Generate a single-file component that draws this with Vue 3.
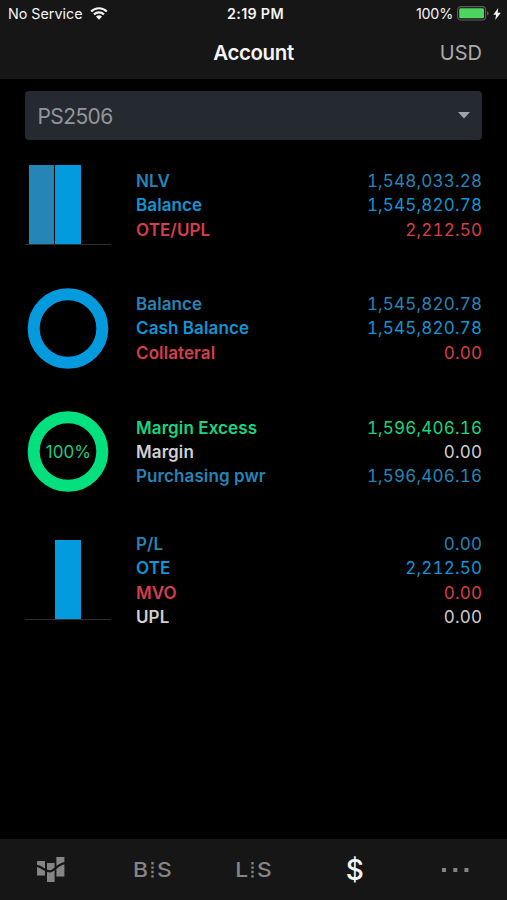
<script setup>
import { ref, computed } from 'vue';

const account = ref('PS2506');
const currency = ref('USD');

const sections = [
  {
    id: 'nlv',
    chart: 'bars',
    bars: [
      { color: '#2585b7', height: 79 },
      { color: '#049ade', height: 79 },
      { color: '#2b0a0c', height: 0 }
    ],
    rows: [
      { label: 'NLV', value: 1548033.28, tone: 'steel' },
      { label: 'Balance', value: 1545820.78, tone: 'blue' },
      { label: 'OTE/UPL', value: 2212.5, tone: 'red' }
    ]
  },
  {
    id: 'balance',
    chart: 'ring',
    ringColor: '#049ade',
    rows: [
      { label: 'Balance', value: 1545820.78, tone: 'steel' },
      { label: 'Cash Balance', value: 1545820.78, tone: 'blue' },
      { label: 'Collateral', value: 0, tone: 'red' }
    ]
  },
  {
    id: 'margin',
    chart: 'ring',
    ringColor: '#03e17f',
    ringLabel: '100%',
    rows: [
      { label: 'Margin Excess', value: 1596406.16, tone: 'green' },
      { label: 'Margin', value: 0, tone: 'white' },
      { label: 'Purchasing pwr', value: 1596406.16, tone: 'steel' }
    ]
  },
  {
    id: 'pl',
    chart: 'bars',
    bars: [
      { color: '#2585b7', height: 0 },
      { color: '#049ade', height: 79 },
      { color: '#d93a4a', height: 0 }
    ],
    rows: [
      { label: 'P/L', value: 0, tone: 'steel' },
      { label: 'OTE', value: 2212.5, tone: 'blue' },
      { label: 'MVO', value: 0, tone: 'red' },
      { label: 'UPL', value: 0, tone: 'white' }
    ]
  }
];

const format = (value) => value.toLocaleString('en-US', {
  minimumFractionDigits: 2,
  maximumFractionDigits: 2
});

const formattedSections = computed(() => sections.map((section) => ({
  ...section,
  rows: section.rows.map((row) => ({ ...row, text: format(row.value) }))
})));
</script>

<template>
  <div class="screen">
    <header class="header">
      <div class="status">
        <div class="status-left">
          <span class="carrier">No Service</span>
          <svg class="wifi" width="18" height="13" viewBox="0 0 18 13">
            <path d="M1.2 4.5a11 11 0 0 1 15.6 0M4 7.5a7.1 7.1 0 0 1 10 0" fill="none" stroke="#f4f4f4" stroke-width="2.2" />
            <path d="M6 9.6a4.3 4.3 0 0 1 6 0L9 12.7z" fill="#f4f4f4" />
          </svg>
        </div>
        <span class="time">2:19 PM</span>
        <div class="status-right">
          <span class="percent">100%</span>
          <svg class="battery" width="32" height="15" viewBox="0 0 32 15">
            <rect x=".6" y=".6" width="28" height="13.4" rx="3.2" fill="none" stroke="#5c5c5c" stroke-width="1.1" />
            <rect x="2.2" y="2.3" width="24.8" height="10" rx="1.4" fill="#4cd55f" />
            <path d="M30 5q1.6.6 1.6 2.3T30 9.6z" fill="#5c5c5c" />
          </svg>
          <svg class="bolt" width="8" height="12" viewBox="0 0 8 12">
            <path d="M5.2 0 .3 6.8h2.8L2.2 12 7.8 4.8H4.7z" fill="#f4f4f4" />
          </svg>
        </div>
      </div>
      <div class="nav">
        <span></span>
        <h1 class="title">Account</h1>
        <button class="currency">{{ currency }}</button>
      </div>
    </header>

    <main class="content">
      <button class="account-select">
        <span class="account">{{ account }}</span>
        <svg width="12" height="7" viewBox="0 0 12 7"><path d="M0 0h12L6 6.6z" fill="#a2a5a8" /></svg>
      </button>

      <section v-for="section in formattedSections" :key="section.id" class="section">
        <div v-if="section.chart === 'bars'" class="bars">
          <div
            v-for="(bar, i) in section.bars"
            :key="i"
            class="bar"
            :style="{ height: bar.height + 'px', backgroundColor: bar.color }"
          ></div>
        </div>
        <svg v-else class="ring" width="86" height="82" viewBox="0 0 86 82">
          <circle cx="43" cy="41.5" r="34.3" fill="none" :stroke="section.ringColor" stroke-width="12" />
          <text v-if="section.ringLabel" x="43.3" y="47.8" text-anchor="middle" class="ring-label">{{ section.ringLabel }}</text>
        </svg>

        <div class="rows">
          <div v-for="row in section.rows" :key="row.label" class="row" :class="row.tone">
            <span class="label">{{ row.label }}</span>
            <span class="value">{{ row.text }}</span>
          </div>
        </div>
      </section>
    </main>

    <nav class="tabs">
      <button class="tab">
        <svg width="28" height="26" viewBox="0 0 28 26">
          <path d="M0 4h8v14.6H0zM10 6h7.6v19H10zM19.4 0h8v19.6h-8z" fill="#858585" />
          <path d="M-1 8.8C5 9.6 8.5 14.4 13 14.4S20 6.6 28.4 6" fill="none" stroke="#161616" stroke-width="2.2" />
        </svg>
      </button>
      <button class="tab pair">
        <span class="glyph">B</span>
        <svg width="3" height="16" viewBox="0 0 3 16"><path d="M.3 0h2.4v2.4H.3zM.3 4.4h2.4v2.4H.3zM.3 8.8h2.4v2.4H.3zM.3 13.2h2.4v2.4H.3z" fill="#858585" /></svg>
        <span class="glyph">S</span>
      </button>
      <button class="tab pair">
        <span class="glyph">L</span>
        <svg width="3" height="16" viewBox="0 0 3 16"><path d="M.3 0h2.4v2.4H.3zM.3 4.4h2.4v2.4H.3zM.3 8.8h2.4v2.4H.3zM.3 13.2h2.4v2.4H.3z" fill="#858585" /></svg>
        <span class="glyph">S</span>
      </button>
      <button class="tab active"><span>$</span></button>
      <button class="tab">
        <svg width="28" height="4" viewBox="0 0 28 4"><path d="M0 0h4v4H0zM11.3 0h4v4h-4zM22.4 0h4v4h-4z" fill="#858585" /></svg>
      </button>
    </nav>
  </div>
</template>

<style>
body {
  margin: 0;
  background: #000;
}
</style>

<style scoped>
.screen {
  display: flex;
  flex-direction: column;
  height: 900px;
  background: #000;
  color: #f4f4f4;
  font-family: Inter, "Liberation Sans", sans-serif;
  overflow: hidden;
}

button {
  border: 0;
  padding: 0;
  background: none;
  color: inherit;
  font: inherit;
}

.header {
  height: 79px;
  flex: none;
  background: #161616;
}

.status {
  display: grid;
  grid-template-columns: 1fr auto 1fr;
  align-items: center;
  height: 27px;
  padding: 0 6px 0 8px;
  font-size: 14.3px;
}

.status-left,
.status-right {
  display: flex;
  align-items: center;
}

.status-right {
  justify-content: flex-end;
}

.wifi {
  margin-left: 8px;
}

.time {
  padding-left: 2px;
  font-weight: 600;
  letter-spacing: 0.3px;
}

.percent {
  letter-spacing: -0.2px;
}

.battery {
  margin-left: 4px;
}

.bolt {
  margin-left: 4px;
}

.nav {
  display: grid;
  grid-template-columns: 1fr auto 1fr;
  align-items: center;
  height: 51px;
  padding: 0 25px;
}

.title {
  margin: 0;
  font-size: 20.5px;
  font-weight: 600;
  letter-spacing: -0.4px;
}

.currency {
  justify-self: end;
  color: #aaa;
  font-size: 20px;
}

.content {
  flex: 1;
  padding: 12px 25px 0;
}

.account-select {
  display: flex;
  align-items: center;
  justify-content: space-between;
  width: 100%;
  height: 49px;
  margin-bottom: 24px;
  padding: 0 12.5px;
  border-radius: 4px;
  background: #252a30;
  color: #92969a;
  font-size: 21px;
}

.account {
  padding-top: 1px;
  letter-spacing: -0.6px;
}

.section {
  display: flex;
  align-items: center;
  gap: 25px;
  margin-bottom: 41.6px;
}

.section:last-child {
  margin-top: -4px;
}

.bars {
  display: flex;
  align-items: flex-end;
  gap: 1px;
  width: 82px;
  height: 80px;
  padding-left: 4px;
  border-bottom: 1px solid #303030;
}

.bar {
  width: 25.3px;
}

.ring-label {
  fill: #1fcb83;
  font-size: 17px;
}

.rows {
  flex: 1;
  padding-top: 2px;
}

.row {
  display: flex;
  justify-content: space-between;
  height: 24.4px;
  line-height: 24.4px;
  font-size: 17px;
}

.label {
  font-weight: 600;
  letter-spacing: 0.1px;
}

.value {
  font-variant-numeric: tabular-nums;
  letter-spacing: 0.2px;
  margin-right: -0.2px;
}

.steel {
  color: #2585b7;
}

.blue {
  color: #1095d5;
}

.red {
  color: #d63e4b;
}

.green {
  color: #16d780;
}

.white {
  color: #d0d0d0;
}

.tabs {
  display: grid;
  grid-template-columns: repeat(5, 1fr);
  height: 61px;
  flex: none;
  background: #161616;
}

.tab {
  display: flex;
  align-items: center;
  justify-content: center;
}

.pair {
  gap: 4px;
  color: #858585;
  font-size: 20px;
  font-weight: 500;
}

.glyph {
  transform: scaleX(1.14);
}

.active {
  font-size: 28px;
  font-weight: 500;
}
</style>
